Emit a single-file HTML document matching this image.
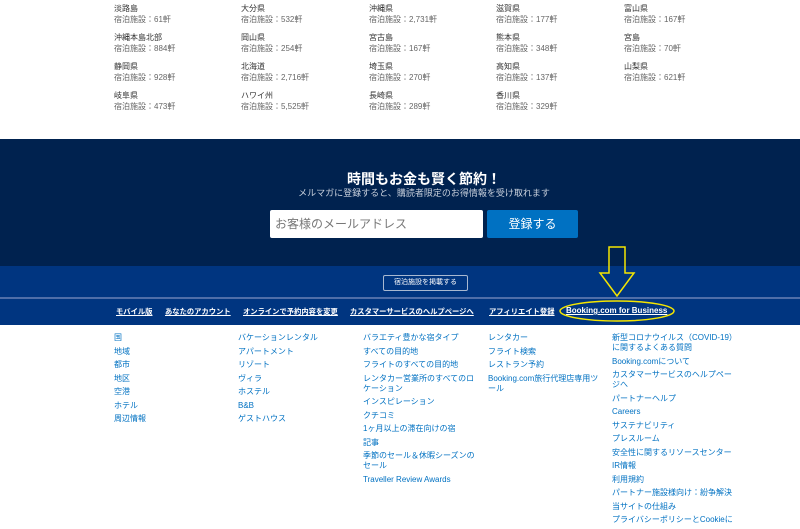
<!DOCTYPE html>
<html><head><meta charset="utf-8"><style>
*{margin:0;padding:0;box-sizing:border-box}
body{width:800px;height:521px;overflow:hidden;background:#fff;font-family:"Liberation Sans","Noto Sans CJK JP",sans-serif;position:relative}
.a{position:absolute;white-space:nowrap}
.c{font-size:8px;color:#333;line-height:11px}
.c .s{color:#666}
.f{font-size:8px;color:#0071c2;line-height:10px;position:absolute}
.f div{margin-bottom:3.5px}
.n{font-size:7.3px;color:#fff;font-weight:bold;text-decoration:underline;top:307px}
</style></head><body>
<div class="a c" style="left:114px;top:3px">淡路島<br><span class="s">宿泊施設：61軒</span></div>
<div class="a c" style="left:241px;top:3px">大分県<br><span class="s">宿泊施設：532軒</span></div>
<div class="a c" style="left:369px;top:3px">沖縄県<br><span class="s">宿泊施設：2,731軒</span></div>
<div class="a c" style="left:496px;top:3px">滋賀県<br><span class="s">宿泊施設：177軒</span></div>
<div class="a c" style="left:624px;top:3px">富山県<br><span class="s">宿泊施設：167軒</span></div>
<div class="a c" style="left:114px;top:32px">沖縄本島北部<br><span class="s">宿泊施設：884軒</span></div>
<div class="a c" style="left:241px;top:32px">岡山県<br><span class="s">宿泊施設：254軒</span></div>
<div class="a c" style="left:369px;top:32px">宮古島<br><span class="s">宿泊施設：167軒</span></div>
<div class="a c" style="left:496px;top:32px">熊本県<br><span class="s">宿泊施設：348軒</span></div>
<div class="a c" style="left:624px;top:32px">宮島<br><span class="s">宿泊施設：70軒</span></div>
<div class="a c" style="left:114px;top:61px">静岡県<br><span class="s">宿泊施設：928軒</span></div>
<div class="a c" style="left:241px;top:61px">北海道<br><span class="s">宿泊施設：2,716軒</span></div>
<div class="a c" style="left:369px;top:61px">埼玉県<br><span class="s">宿泊施設：270軒</span></div>
<div class="a c" style="left:496px;top:61px">高知県<br><span class="s">宿泊施設：137軒</span></div>
<div class="a c" style="left:624px;top:61px">山梨県<br><span class="s">宿泊施設：621軒</span></div>
<div class="a c" style="left:114px;top:90px">岐阜県<br><span class="s">宿泊施設：473軒</span></div>
<div class="a c" style="left:241px;top:90px">ハワイ州<br><span class="s">宿泊施設：5,525軒</span></div>
<div class="a c" style="left:369px;top:90px">長崎県<br><span class="s">宿泊施設：289軒</span></div>
<div class="a c" style="left:496px;top:90px">香川県<br><span class="s">宿泊施設：329軒</span></div>

<div class="a" style="left:0;top:139px;width:800px;height:127px;background:#00224f"></div>
<div class="a" style="left:0;top:266px;width:800px;height:59px;background:#003580"></div>
<div class="a" style="left:0;top:297px;width:800px;height:2px;background:#4f6ea8"></div>
<div class="a" style="left:324px;top:169px;width:200px;text-align:center;color:#fff;font-size:14px;font-weight:bold">時間もお金も賢く節約！</div>
<div class="a" style="left:274px;top:186px;width:300px;text-align:center;color:#c8d0dc;font-size:9px">メルマガに登録すると、購読者限定のお得情報を受け取れます</div>
<div class="a" style="left:270px;top:210px;width:213px;height:28px;background:#fff;border-radius:2px;color:#777;font-size:12px;line-height:28px;padding-left:5px">お客様のメールアドレス</div>
<div class="a" style="left:487px;top:210px;width:91px;height:28px;background:#0071c2;border-radius:2px;color:#fff;font-size:12px;line-height:28px;text-align:center">登録する</div>
<div class="a" style="left:383px;top:275px;width:85px;height:16px;border:1px solid #a8b8d0;border-radius:2px;color:#fff;font-size:7px;line-height:14px;text-align:center">宿泊施設を掲載する</div>

<div class="a n" style="left:116px">モバイル版</div>
<div class="a n" style="left:165px">あなたのアカウント</div>
<div class="a n" style="left:243px">オンラインで予約内容を変更</div>
<div class="a n" style="left:350px">カスタマーサービスのヘルプページへ</div>
<div class="a n" style="left:489px">アフィリエイト登録</div>
<div class="a n" style="left:566px;font-size:8px;top:306px">Booking.com for Business</div>

<svg class="a" style="left:0;top:0" width="800" height="330">
<path d="M609 247 H625 V273 H634 L617 296 L600 273 H609 Z" fill="none" stroke="#f5e600" stroke-width="1.5"/>
<ellipse cx="617" cy="311" rx="57" ry="10" fill="none" stroke="#f5e600" stroke-width="1.5"/>
</svg>

<div class="f" style="left:114px;top:333px"><div>国</div><div>地域</div><div>都市</div><div>地区</div><div>空港</div><div>ホテル</div><div>周辺情報</div></div>
<div class="f" style="left:238px;top:333px"><div>バケーションレンタル</div><div>アパートメント</div><div>リゾート</div><div>ヴィラ</div><div>ホステル</div><div>B&amp;B</div><div>ゲストハウス</div></div>
<div class="f" style="left:363px;top:333px;width:115px;white-space:normal"><div>バラエティ豊かな宿タイプ</div><div>すべての目的地</div><div>フライトのすべての目的地</div><div>レンタカー営業所のすべてのロケーション</div><div>インスピレーション</div><div>クチコミ</div><div>1ヶ月以上の滞在向けの宿</div><div>記事</div><div>季節のセール＆休暇シーズンのセール</div><div>Traveller Review Awards</div></div>
<div class="f" style="left:488px;top:333px;width:115px"><div>レンタカー</div><div>フライト検索</div><div>レストラン予約</div><div>Booking.com旅行代理店専用ツール</div></div>
<div class="f" style="left:612px;top:333px;width:125px"><div>新型コロナウイルス（COVID-19）に関するよくある質問</div><div>Booking.comについて</div><div>カスタマーサービスのヘルプページへ</div><div>パートナーヘルプ</div><div>Careers</div><div>サステナビリティ</div><div>プレスルーム</div><div>安全性に関するリソースセンター</div><div>IR情報</div><div>利用規約</div><div>パートナー施設様向け：紛争解決</div><div>当サイトの仕組み</div><div>プライバシーポリシーとCookieに</div></div>
</body></html>
